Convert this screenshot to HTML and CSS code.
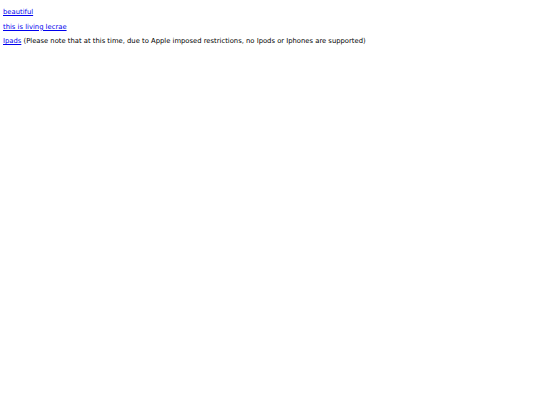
FILE: index.html
```html
<!DOCTYPE html>
<html>
<head>
<meta charset="utf-8">
<link rel="stylesheet" href="styles.css">
</head>
<body class="page">
<p class="line"><a href="#">beautiful</a></p>
<p class="line"><a href="#">this is living lecrae</a></p>
<p class="line"><a href="#">Ipads</a> (Please note that at this time, due to Apple imposed restrictions, no Ipods or Iphones are supported)</p>
</body>
</html>
```
FILE: styles.css
```css
.page {
  margin: 3px;
  font-family: "DejaVu Sans", Verdana, sans-serif;
  font-size: 6.8px;
  color: #000;
  background: #fff;
}
.line {
  margin: 0 0 6px 0;
  line-height: 8.5px;
}
.line:first-child {
  margin-top: 5px;
}
a {
  color: #00e;
}
```
